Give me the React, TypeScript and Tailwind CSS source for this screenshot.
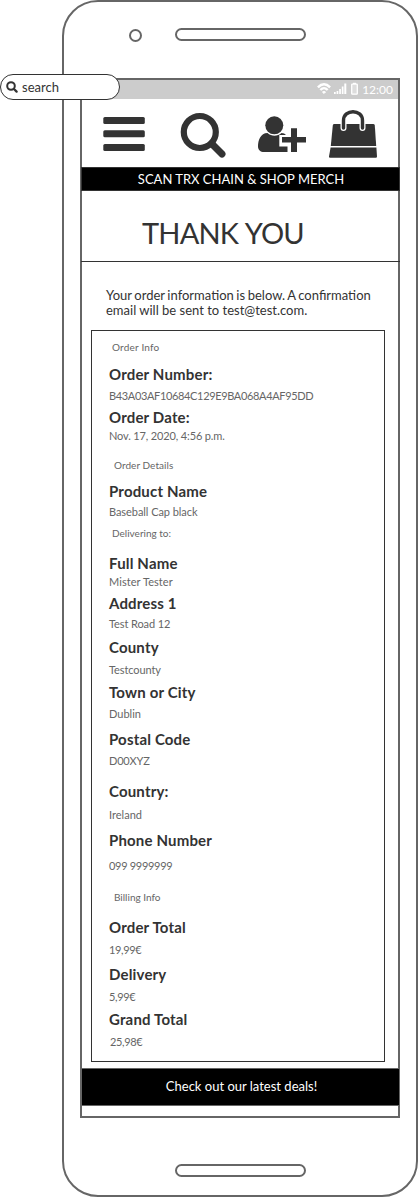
import React from "react";

type Kind = "section" | "label" | "value";

type Line = { kind: Kind; text: string; space: string };

const kindClass: Record<Kind, string> = {
  section: "text-[10px] leading-[12px] text-[#666666]",
  label: "pl-[17px] text-[15px] leading-[18px] font-bold tracking-[0.17px] text-[#333333]",
  value: "text-[11px] leading-[13px] text-[#666666]",
};

const lines: Line[] = [
  { kind: "section", text: "Order Info", space: "pl-5 tracking-[0.2px]" },
  { kind: "label", text: "Order Number:", space: "mt-3" },
  { kind: "value", text: "B43A03AF10684C129E9BA068A4AF95DD", space: "mt-1.5 pl-[17px] tracking-[-0.35px]" },
  { kind: "label", text: "Order Date:", space: "mt-1.5" },
  { kind: "value", text: "Nov. 17, 2020, 4:56 p.m.", space: "mt-[3px] pl-[17px] tracking-[-0.14px]" },
  { kind: "section", text: "Order Details", space: "mt-[17px] pl-[22px] tracking-[0.05px]" },
  { kind: "label", text: "Product Name", space: "mt-[11px]" },
  { kind: "value", text: "Baseball Cap black", space: "mt-[5px] pl-[17px] tracking-[-0.06px]" },
  { kind: "section", text: "Delivering to:", space: "mt-[9px] pl-5" },
  { kind: "label", text: "Full Name", space: "mt-[15px]" },
  { kind: "value", text: "Mister Tester", space: "mt-[3px] pl-[17px] tracking-[0.06px]" },
  { kind: "label", text: "Address 1", space: "mt-1.5" },
  { kind: "value", text: "Test Road 12", space: "mt-[5px] pl-[17px] tracking-[-0.1px]" },
  { kind: "label", text: "County", space: "mt-2" },
  { kind: "value", text: "Testcounty", space: "mt-[7px] pl-[17px] tracking-[-0.1px]" },
  { kind: "label", text: "Town or City", space: "mt-[7px]" },
  { kind: "value", text: "Dublin", space: "mt-1.5 pl-[17px]" },
  { kind: "label", text: "Postal Code", space: "mt-2.5" },
  { kind: "value", text: "D00XYZ", space: "mt-1.5 pl-[17px] tracking-[-0.2px]" },
  { kind: "label", text: "Country:", space: "mt-[15px]" },
  { kind: "value", text: "Ireland", space: "mt-2 pl-[17px]" },
  { kind: "label", text: "Phone Number", space: "mt-2.5" },
  { kind: "value", text: "099 9999999", space: "mt-2.5 pl-[17px] tracking-[-0.3px]" },
  { kind: "section", text: "Billing Info", space: "mt-[19px] pl-[22px]" },
  { kind: "label", text: "Order Total", space: "mt-[15px]" },
  { kind: "value", text: "19,99€", space: "mt-[7px] pl-[17px] tracking-[-0.35px]" },
  { kind: "label", text: "Delivery", space: "mt-[9px]" },
  { kind: "value", text: "5,99€", space: "mt-[7px] pl-[17px] tracking-[-0.35px]" },
  { kind: "label", text: "Grand Total", space: "mt-[7px]" },
  { kind: "value", text: "25,98€", space: "mt-[7px] pl-[18px] tracking-[-0.35px]" },
];

function SearchIcon({ className }: { className: string }) {
  return (
    <svg className={className} viewBox="0 0 12 12" fill="none" stroke="#333333">
      <circle cx="5" cy="5" r="3.8" strokeWidth="2" />
      <path d="M8 8 10.6 10.6" strokeWidth="2.3" strokeLinecap="round" />
    </svg>
  );
}

function StatusIcons() {
  return (
    <svg className="mb-px h-[14px] w-[42px]" viewBox="0 0 42 14">
      <g fill="none" stroke="#ffffff" strokeWidth="2.4">
        <path d="M.9 5.4Q7 -.8 13.1 5.4" />
        <path d="M3.3 8Q7 4.2 10.7 8" />
        <path d="M5.4 10Q7 8.6 8.6 10L7 11.6Z" fill="#ffffff" strokeWidth=".8" />
      </g>
      <g fill="#ffffff">
        <path d="M17 10h1.7v2H17zM19.6 9h1.7v3h-1.7zM22.2 7h1.7v5h-1.7zM24.8 4.5h1.7V12h-1.7zM27.3 1.5h2V12h-2z" />
        <path d="M36 .8h3v1.4h-3z" />
      </g>
      <rect x="34.7" y="2.2" width="5.6" height="10" rx=".6" fill="#dddddd" stroke="#ffffff" strokeWidth="1.3" />
    </svg>
  );
}

function Header() {
  return (
    <nav className="flex h-[68px] shrink-0">
      <svg className="h-[68px] w-[316px]" viewBox="82 99 316 68" fill="#333333">
        <rect x="103.3" y="117" width="41.5" height="7" rx="1.5" />
        <rect x="103.3" y="130.3" width="41.5" height="7" rx="1.5" />
        <rect x="103.3" y="144" width="41.5" height="7" rx="1.5" />
        <g fill="none" stroke="#333333">
          <circle cx="199.8" cy="132" r="16" strokeWidth="6.2" />
          <path d="M212 144 222 154" strokeWidth="7" strokeLinecap="round" />
        </g>
        <path d="M267.5 133C260.5 133 258 140.5 258 146.5C258 150 260.5 152 264 152H287.5V146.5H279.3V135H286Q284.5 133 281.5 133C277.5 136.5 271.5 136.5 267.5 133Z" />
        <path d="M291 128.2h6v8.8h9v5.6h-9v9.4h-6v-9.4h-9v-5.6h9z" stroke="#ffffff" strokeWidth="2.6" />
        <path d="M291 128.2h6v8.8h9v5.6h-9v9.4h-6v-9.4h-9v-5.6h9z" />
        <circle cx="274.3" cy="125.3" r="9" />
        <path d="M334.3 124H373.2Q374.6 124 374.8 125.4L376.2 146H330.8L332.8 125.4Q333 124 334.3 124Z" />
        <path d="M330.6 147.4H376.4L377 156.4Q377.1 157.8 375.7 157.8H330.2Q328.8 157.8 329 156.4Z" />
        <path d="M343.5 128V120.5C343.5 108.8 362.5 108.8 362.5 120.5V128" fill="none" stroke="#ffffff" strokeWidth="6" strokeLinecap="round" />
        <path d="M343.5 128V120.5C343.5 108.8 362.5 108.8 362.5 120.5V128" fill="none" stroke="#333333" strokeWidth="3.4" strokeLinecap="round" />
      </svg>
    </nav>
  );
}

export default function App() {
  return (
    <div className="relative h-[1197px] w-[418px] bg-white pl-[62px] font-['Lato',sans-serif]">
      <div className="flex h-[1197px] w-[356px] flex-col rounded-[36px] border-2 border-[#666666] pl-4">
        <div className="flex h-[76px] shrink-0 items-start pt-[26px] pl-[49px]">
          <div className="mt-px size-[13px] rounded-full border-2 border-[#666666]" />
          <div className="ml-[33px] h-[13px] w-[131px] rounded-full border-2 border-[#666666]" />
        </div>

        <main className="flex h-[1040px] w-80 shrink-0 flex-col border-2 border-[#666666]">
          <div className="flex h-[19px] shrink-0 items-center justify-end gap-[3px] bg-[#cccccc] pr-[5px] text-[12px] leading-[16px] text-white">
            <StatusIcons />
            <span>12:00</span>
          </div>
          <Header />
          <div className="-mr-0.5 -ml-px h-6 shrink-0 border border-[#333333] bg-black pl-px text-center text-[13px] leading-[23px] text-white">
            SCAN TRX CHAIN &amp; SHOP MERCH
          </div>
          <h1 className="-mr-0.5 -ml-px h-[71px] shrink-0 border-b border-[#333333] pt-6 pl-[61px] text-[29px] leading-[36px] tracking-[-0.8px] [word-spacing:1px] text-[#333333]">
            THANK YOU
          </h1>
          <p className="h-[68px] shrink-0 pt-[26px] pl-6 text-[13px] leading-[15px] text-[#333333]">
            <span className="[word-spacing:-0.75px]">Your order information is below. A confirmation</span>
            <br />
            email will be sent to test@test.com.
          </p>
          <section className="ml-[9px] h-[732px] w-[294px] shrink-0 border border-[#333333] pt-2.5">
            {lines.map((line) => (
              <div key={line.text} className={`${kindClass[line.kind]} ${line.space}`}>
                {line.text}
              </div>
            ))}
          </section>
          <footer className="mt-1.5 -mr-px h-[38px] shrink-0 border-y border-[#666666] bg-black pl-0.5 text-center text-[13px] leading-[34px] text-white">
            Check out our latest deals!
          </footer>
        </main>

        <div className="mt-[46px] ml-[95px] h-[13px] w-[131px] shrink-0 rounded-full border-2 border-[#666666]" />
      </div>

      <div className="absolute top-[74px] left-0 flex h-[26px] w-[120px] items-center rounded-full border border-[#333333] bg-white pl-[5px] text-[13px] leading-4 text-[#333333]">
        <SearchIcon className="mr-1 size-3" />
        search
      </div>
    </div>
  );
}
